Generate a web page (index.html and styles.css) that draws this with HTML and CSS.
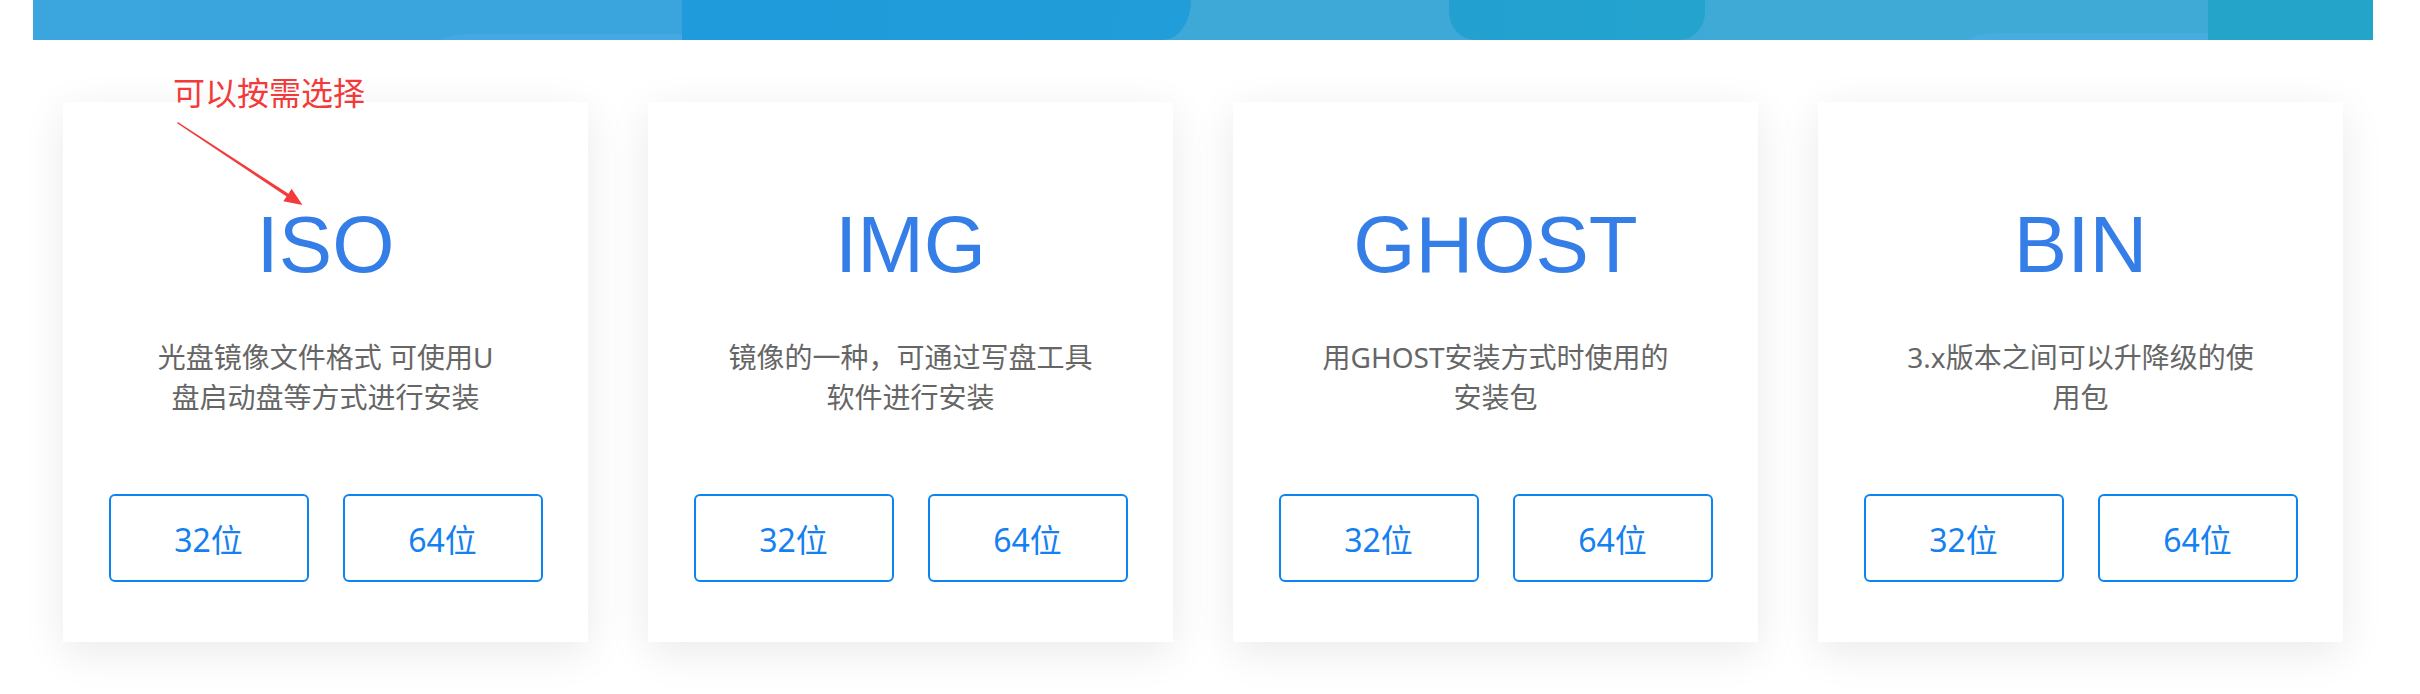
FILE: index.html
```html
<!DOCTYPE html>
<html lang="zh-CN">
<head>
<meta charset="utf-8">
<title>镜像格式</title>
<link rel="stylesheet" href="styles.css">
</head>
<body>
<div class="page">
  <div class="banner">
    <div class="seg seg-1"><span class="glow glow-1"></span></div>
    <div class="seg seg-2"></div>
    <div class="seg seg-3"></div>
    <div class="seg seg-4"></div>
    <div class="seg seg-5"><span class="glow glow-5"></span></div>
    <div class="seg seg-6"></div>
  </div>

  <div class="cards">
    <div class="card">
      <div class="note">可以按需选择</div>
      <svg class="arrow" width="260" height="120" viewBox="0 0 260 120">
        <polygon fill="#f23c3c" points="114.8,20.1 225.5,91.7 228.6,86.8 239.5,103 220.3,99.3 223.6,94.5 114.1,21.2"/>
      </svg>
      <h2 class="title">ISO</h2>
      <p class="desc">光盘镜像文件格式 可使用U<br>盘启动盘等方式进行安装</p>
      <div class="btns">
        <a class="btn">32位</a>
        <a class="btn">64位</a>
      </div>
    </div>

    <div class="card">
      <h2 class="title">IMG</h2>
      <p class="desc">镜像的一种，可通过写盘工具<br>软件进行安装</p>
      <div class="btns">
        <a class="btn">32位</a>
        <a class="btn">64位</a>
      </div>
    </div>

    <div class="card">
      <h2 class="title">GHOST</h2>
      <p class="desc">用GHOST安装方式时使用的<br>安装包</p>
      <div class="btns">
        <a class="btn">32位</a>
        <a class="btn">64位</a>
      </div>
    </div>

    <div class="card">
      <h2 class="title">BIN</h2>
      <p class="desc">3.x版本之间可以升降级的使<br>用包</p>
      <div class="btns">
        <a class="btn">32位</a>
        <a class="btn">64位</a>
      </div>
    </div>
  </div>
</div>
</body>
</html>
```

FILE: styles.css
```css
html, body {
  margin: 0;
  padding: 0;
  background: #ffffff;
}

body {
  font-family: "Noto Sans", "Noto Sans CJK SC", sans-serif;
}

.page {
  width: 2340px;
  margin-left: 33px;
}

/* banner strip (bottom of a hero image) */
.banner {
  display: flex;
  height: 40px;
  background: #3ea8d8;
  overflow: hidden;
}

.seg {
  position: relative;
  height: 100%;
}

.seg-1 {
  width: 649px;
  background: linear-gradient(100deg, #3ba5dd 0%, #3aa4dc 100%);
}

.glow {
  position: absolute;
  display: block;
}

.glow-1 {
  right: 0;
  bottom: 0;
  width: 240px;
  height: 6px;
  background: #44a9e0;
  border-top-left-radius: 30px 6px;
}

.seg-2 {
  width: 509px;
  background: linear-gradient(100deg, #1f9bdc 0%, #219dd9 100%);
  border-bottom-right-radius: 28px 40px;
}

.seg-3 {
  width: 258px;
  background: #3ea9d7;
}

.seg-4 {
  width: 256px;
  background: linear-gradient(100deg, #22a1d1 0%, #23a3cd 100%);
  border-bottom-left-radius: 26px 28px;
  border-bottom-right-radius: 26px 28px;
}

.seg-5 {
  width: 503px;
  background: #3faad6;
}

.glow-5 {
  right: 0;
  bottom: 0;
  width: 238px;
  height: 7px;
  background: #47ade0;
  border-top-left-radius: 30px 7px;
}

.seg-6 {
  flex: 1;
  background: #24a4c8;
}

/* cards */
.cards {
  display: flex;
  gap: 60px;
  padding: 62px 30px 52px;
}

.card {
  position: relative;
  width: 525px;
  box-sizing: border-box;
  padding: 93px 0 60px;
  background: #ffffff;
  box-shadow: 0 10px 40px rgba(0, 0, 0, 0.085);
  text-align: center;
}

.note {
  position: absolute;
  left: 110px;
  top: -27px;
  font-family: "Noto Sans CJK SC", sans-serif;
  font-size: 32px;
  line-height: 32px;
  color: #f33a3a;
  white-space: nowrap;
}

.arrow {
  position: absolute;
  left: 0;
  top: 0;
}

.title {
  margin: 0;
  font-family: "Liberation Sans", Arial, sans-serif;
  font-weight: normal;
  font-size: 80px;
  line-height: 100px;
  color: #357ee7;
}

.desc {
  margin: 42px 0 0;
  font-size: 28px;
  line-height: 40px;
  color: #666666;
  white-space: nowrap;
}

.btns {
  display: flex;
  justify-content: center;
  gap: 34px;
  margin-top: 77px;
}

.btn {
  display: flex;
  align-items: center;
  justify-content: center;
  width: 200px;
  height: 88px;
  box-sizing: border-box;
  border: 2px solid #0c84f2;
  border-radius: 6px;
  font-size: 32px;
  color: #1581f0;
  text-decoration: none;
}
```
